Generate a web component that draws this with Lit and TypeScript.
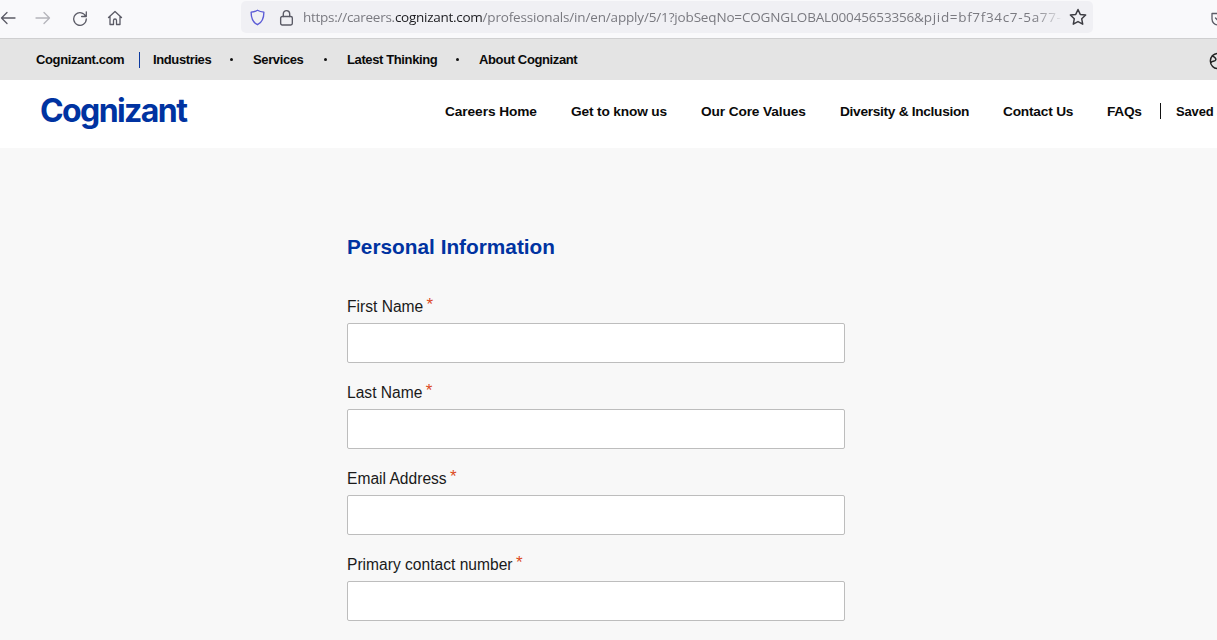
import { LitElement, html, css, svg } from "lit";
import { customElement } from "lit/decorators.js";

const navTop = [
  { t: "Industries", w: 58 },
  { t: "Services", w: 52 },
  { t: "Latest Thinking", w: 90 },
  { t: "About Cognizant", w: 100 },
];
const navMain = [
  { t: "Careers Home", w: 92, ls: -0.08 },
  { t: "Get to know us", w: 96, ls: -0.15 },
  { t: "Our Core Values", w: 105, ls: -0.12 },
  { t: "Diversity & Inclusion", w: 129, ls: -0.3 },
  { t: "Contact Us", w: 70, ls: -0.2 },
  { t: "FAQs", w: 34, ls: -0.3 },
];
const fields = ["First Name", "Last Name", "Email Address", "Primary contact number"];

const icon = (w: number, body: unknown, cls = "") => html`<svg class=${cls} width=${w} height=${w} viewBox="0 0 16 16" fill="none" stroke="currentColor" stroke-width="1.3" stroke-linecap="round" stroke-linejoin="round">${body}</svg>`;

@customElement("app-root")
export class AppRoot extends LitElement {
  static styles = css`
    :host { display: block; width: 1217px; height: 640px; overflow: hidden; background: #f8f8f8; font-family: "Liberation Sans", sans-serif; color: #1a1a1a; }
    .chrome { height: 38px; background: #f9f9fb; border-bottom: 1px solid #cfcfd0; display: flex; align-items: center; color: #5b5b66; white-space: nowrap; }
    .btns { width: 241px; flex: none; display: flex; align-items: center; height: 38px; margin-top: -2px; }
    .btn { flex: none; display: block; }
    .back { margin-left: 0; }
    .fwd { margin-left: 19px; color: #b4b4ba; }
    .reload { margin-left: 21px; }
    .home { margin-left: 19px; }
    .url { flex: none; width: 852px; height: 32px; margin-top: -4px; background: #f0f0f4; border-radius: 5px; display: flex; align-items: center; position: relative; overflow: hidden; }
    .shield { margin-left: 8px; color: #5b5bd6; }
    .lock { margin-left: 12px; }
    .addr { margin-left: 8px; font: 13.5px "Open Sans", sans-serif; color: #7a7a80; width: 761px; overflow: hidden; letter-spacing: -0.27px; -webkit-mask-image: linear-gradient(to right, #000 96%, transparent); mask-image: linear-gradient(to right, #000 96%, transparent); }
    .addr b { font-weight: 400; color: #1c1c20; }
    .addr .rest { letter-spacing: -0.16px; }
    .addr .tail { letter-spacing: 0.67px; }
    .star { margin-left: 5px; color: #3c3c42; }
    .ext { margin-left: 117px; flex: none; color: #5b5b66; }
    .top { height: 41px; background: #e4e4e4; display: flex; align-items: center; padding-left: 36px; font: 700 13px "Liberation Sans", sans-serif; color: #0a0a0a; white-space: nowrap; position: relative; letter-spacing: -0.38px; }
    .top .sep { width: 1px; height: 16px; background: #0b3aa0; margin: 0 13px 0 14px; }
    .top .dot { width: 3px; height: 3px; border-radius: 50%; background: #111; margin: 0 20px 0 19px; }
    .cell { display: block; flex: none; }
    .globe { position: absolute; left: 1209px; top: 13px; color: #222; }
    .head { height: 68px; background: #fff; display: flex; align-items: center; white-space: nowrap; }
    .logo { margin-left: 40px; width: 405px; flex: none; font: 700 32px "Inter", sans-serif; letter-spacing: -1.6px; color: #0033a1; line-height: 1; margin-top: -6px; }
    .main { display: flex; align-items: center; font: 700 13.7px "Liberation Sans", sans-serif; color: #0a0a0a; margin-top: -6px; }
    .main .cell + .cell { margin-left: 34px; }
    .main .bar { width: 1px; height: 16px; background: #111; margin: 0 15px 0 19px; }
    .saved { font-size: 13px; letter-spacing: -0.15px; }
    .form { margin-left: 347px; width: 498px; padding-top: 85px; }
    h1 { margin: 0 0 36px; font: 700 20.8px/28px "Liberation Sans", sans-serif; color: #0033a1; }
    .field { display: block; margin-bottom: 20px; }
    .lbl { display: block; height: 26px; font: 400 15.6px/20px "Liberation Sans", sans-serif; color: #1a1a1a; }
    .req { color: #dc4a1e; font-size: 17px; line-height: 10px; vertical-align: 2px; margin-left: -1px; }
    input { display: block; box-sizing: border-box; width: 498px; height: 40px; background: #fff; border: 1px solid #bdbdbd; border-radius: 2px; margin: 0; }
  `;

  render() {
    return html`
      <div class="chrome">
        <div class="btns">
          ${icon(16, svg`<path d="M15 8H1.500M7 2.500 1.500 8 7 13.500"/>`, "btn back")}
          ${icon(16, svg`<path d="M1 8h13.500M9 2.500 14.500 8 9 13.500"/>`, "btn fwd")}
          ${icon(16, svg`<path d="M13.800 6.500A6.300 6.300 0 1 0 14.300 9M14.300 1.800v4.700H9.600"/>`, "btn reload")}
          ${icon(16, svg`<path d="M1.500 7.500 8 1.500l6.500 6M3 6.500V14.500h3.500V10.500a1.500 1.500 0 0 1 3 0v4H13V6.500"/>`, "btn home")}
        </div>
        <div class="url">
          ${icon(17, svg`<path d="M8 1.200c2 1.200 4 1.600 6 1.800 0 5.500-1.500 9.500-6 11.800C3.500 12.500 2 8.500 2 3c2-.2 4-.6 6-1.800z"/>`, "shield")}
          ${icon(17, svg`<rect x="2.500" y="7" width="11" height="8" rx="1.500"/><path d="M5 7V4.500a3 3 0 0 1 6 0V7"/>`, "lock")}
          <div class="addr">https://careers.<b>cognizant.com</b><span class="rest">/professionals/in/en/apply/5/1?jobSeqNo=COGNGLOBAL00045653356&amp;</span><span class="tail">pjid=bf7f34c7-5a77-</span></div>
          ${icon(18, svg`<path d="M8 1.300l2 4.400 4.800.6-3.500 3.300.9 4.800L8 12.100l-4.200 2.300.9-4.800L1.200 6.300 6 5.700z"/>`, "star")}
        </div>
        ${icon(16, svg`<path d="M2 2.500h12v5.500a6 6 0 0 1-12 0zM5.500 7 8 9.500 11 6"/>`, "ext")}
      </div>
      <div class="top">
        <span class="cell" style="width:89px">Cognizant.com</span><i class="sep"></i>
        ${navTop.map((n, i) => html`<span class="cell" style="width:${n.w}px">${n.t}</span>${i < navTop.length - 1 ? html`<i class="dot"></i>` : ""}`)}
        ${icon(18, svg`<circle cx="8" cy="8" r="6.800"/><path d="M3 3.500c2 1 3.500 2 3 3.500S3 8 2 9M9 1.500c-.5 2 1 3 3 3M8 15c0-2 1-3 2.500-3.500s2-2 3.500-1.500"/>`, "globe")}
      </div>
      <div class="head">
        <div class="logo">Cognizant</div>
        <div class="main">
          ${navMain.map((n) => html`<span class="cell" style="width:${n.w}px;letter-spacing:${n.ls}px">${n.t}</span>`)}
          <i class="bar"></i><b class="saved">Saved&nbsp;Jobs</b>
        </div>
      </div>
      <div class="form">
        <h1>Personal Information</h1>
        ${fields.map((f) => html`<label class="field"><span class="lbl">${f} <span class="req">*</span></span><input type="text" /></label>`)}
      </div>
    `;
  }
}
